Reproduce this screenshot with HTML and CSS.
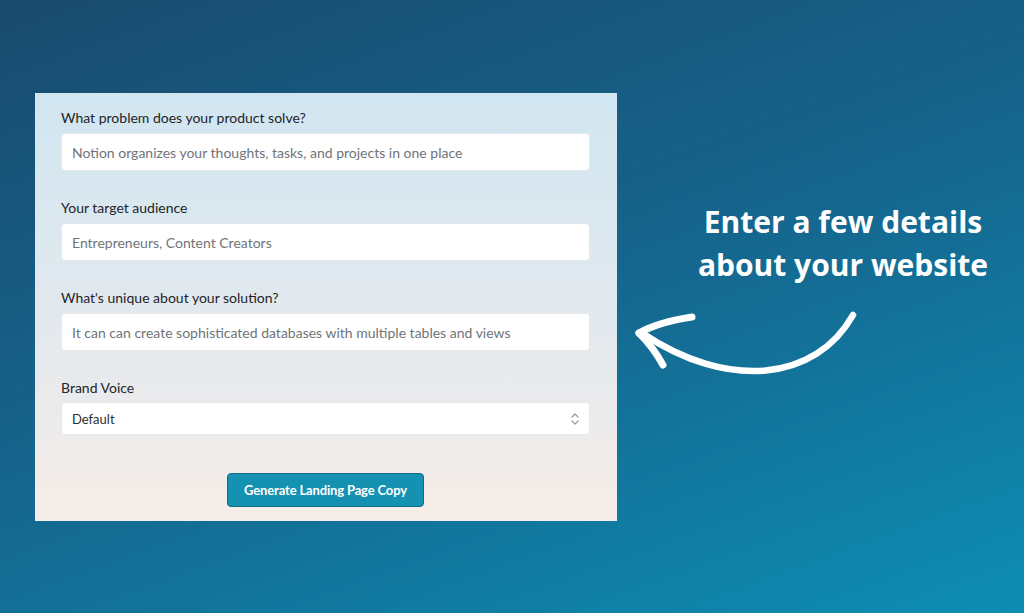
FILE: index.html
```html
<!DOCTYPE html>
<html>
<head>
<meta charset="utf-8">
<link rel="stylesheet" href="styles.css">
</head>
<body>
<div class="page">
  <form class="card">
    <div class="field">
      <label class="label">What problem does your product solve?</label>
      <div class="input placeholder">Notion organizes your thoughts, tasks, and projects in one place</div>
    </div>
    <div class="field">
      <label class="label">Your target audience</label>
      <div class="input placeholder">Entrepreneurs, Content Creators</div>
    </div>
    <div class="field">
      <label class="label">What's unique about your solution?</label>
      <div class="input placeholder">It can can create sophisticated databases with multiple tables and views</div>
    </div>
    <div class="field">
      <label class="label">Brand Voice</label>
      <div class="select">
        <span>Default</span>
        <svg class="chev" width="10" height="14" viewBox="0 0 10 14"><path d="M2 5 L5 2 L8 5 M2 9 L5 12 L8 9" fill="none" stroke="#9a9a9a" stroke-width="1.2" stroke-linecap="round" stroke-linejoin="round"/></svg>
      </div>
    </div>
    <div class="actions">
      <button type="button" class="btn">Generate Landing Page Copy</button>
    </div>
  </form>
  <aside class="aside">
    <h1 class="headline">Enter a few details<br>about your website</h1>
    <svg class="arrow" width="240" height="80" viewBox="630 302 240 80">
      <path d="M853 316 C 816 382 728 392 642 334" fill="none" stroke="#fff" stroke-width="6.5" stroke-linecap="round"/>
      <path d="M639 334 C 655 325 672 321 692 318" fill="none" stroke="#fff" stroke-width="7" stroke-linecap="round"/>
      <path d="M639 334 C 650 345 657 355 663 366" fill="none" stroke="#fff" stroke-width="7" stroke-linecap="round"/>
    </svg>
  </aside>
</div>
</body>
</html>
```

FILE: styles.css
```css
html, body {
  margin: 0;
  padding: 0;
}
body {
  width: 1024px;
  height: 613px;
  overflow: hidden;
  background: linear-gradient(160deg, #194b6e 0%, #16628a 45%, #0d8db3 100%);
  font-family: Lato, "Liberation Sans", sans-serif;
}
.page {
  display: flex;
  align-items: flex-start;
  padding-left: 35px;
}
.card {
  margin-top: 93px;
  width: 582px;
  height: 428px;
  box-sizing: border-box;
  padding: 15px 27px 15px 26px;
  background: linear-gradient(180deg, #d1e6f1 0%, #e3e9ee 55%, #f6ede8 100%);
  display: flex;
  flex-direction: column;
}
.field {
  display: flex;
  flex-direction: column;
  margin-bottom: 27px;
}
.label {
  font-size: 14px;
  line-height: 20px;
  color: #1f2428;
  margin-bottom: 5px;
}
.input {
  height: 38px;
  box-sizing: border-box;
  background: #fff;
  border: 1px solid #e6e9ec;
  border-radius: 4px;
  padding: 0 10px;
  display: flex;
  align-items: center;
  font-size: 14px;
}
.placeholder {
  color: #707478;
}
.select {
  height: 33px;
  margin-top: -1px;
  box-sizing: border-box;
  background: #fff;
  border: 1px solid #e6e9ec;
  border-radius: 4px;
  padding: 0 9px 0 10px;
  display: flex;
  align-items: center;
  justify-content: space-between;
  font-size: 13px;
  color: #2a2e32;
}
.actions {
  display: flex;
  justify-content: center;
  margin-top: 11px;
}
.btn {
  width: 197px;
  height: 34px;
  background: #1591b1;
  border: 1px solid #0f6c85;
  border-radius: 4px;
  color: #fff;
  font-family: Lato, "Liberation Sans", sans-serif;
  font-weight: 700;
  font-size: 13px;
  letter-spacing: -0.15px;
  padding: 0;
}
.aside {
  flex: 1;
  padding-top: 200px;
  padding-left: 13px;
  display: flex;
  flex-direction: column;
}
.headline {
  margin: 0;
  padding-left: 32px;
  text-align: center;
  color: #fff;
  font-family: "Open Sans", sans-serif;
  font-weight: 700;
  font-size: 30px;
  line-height: 43px;
  letter-spacing: 0;
}
.arrow {
  margin-top: 15px;
  display: block;
}
```
